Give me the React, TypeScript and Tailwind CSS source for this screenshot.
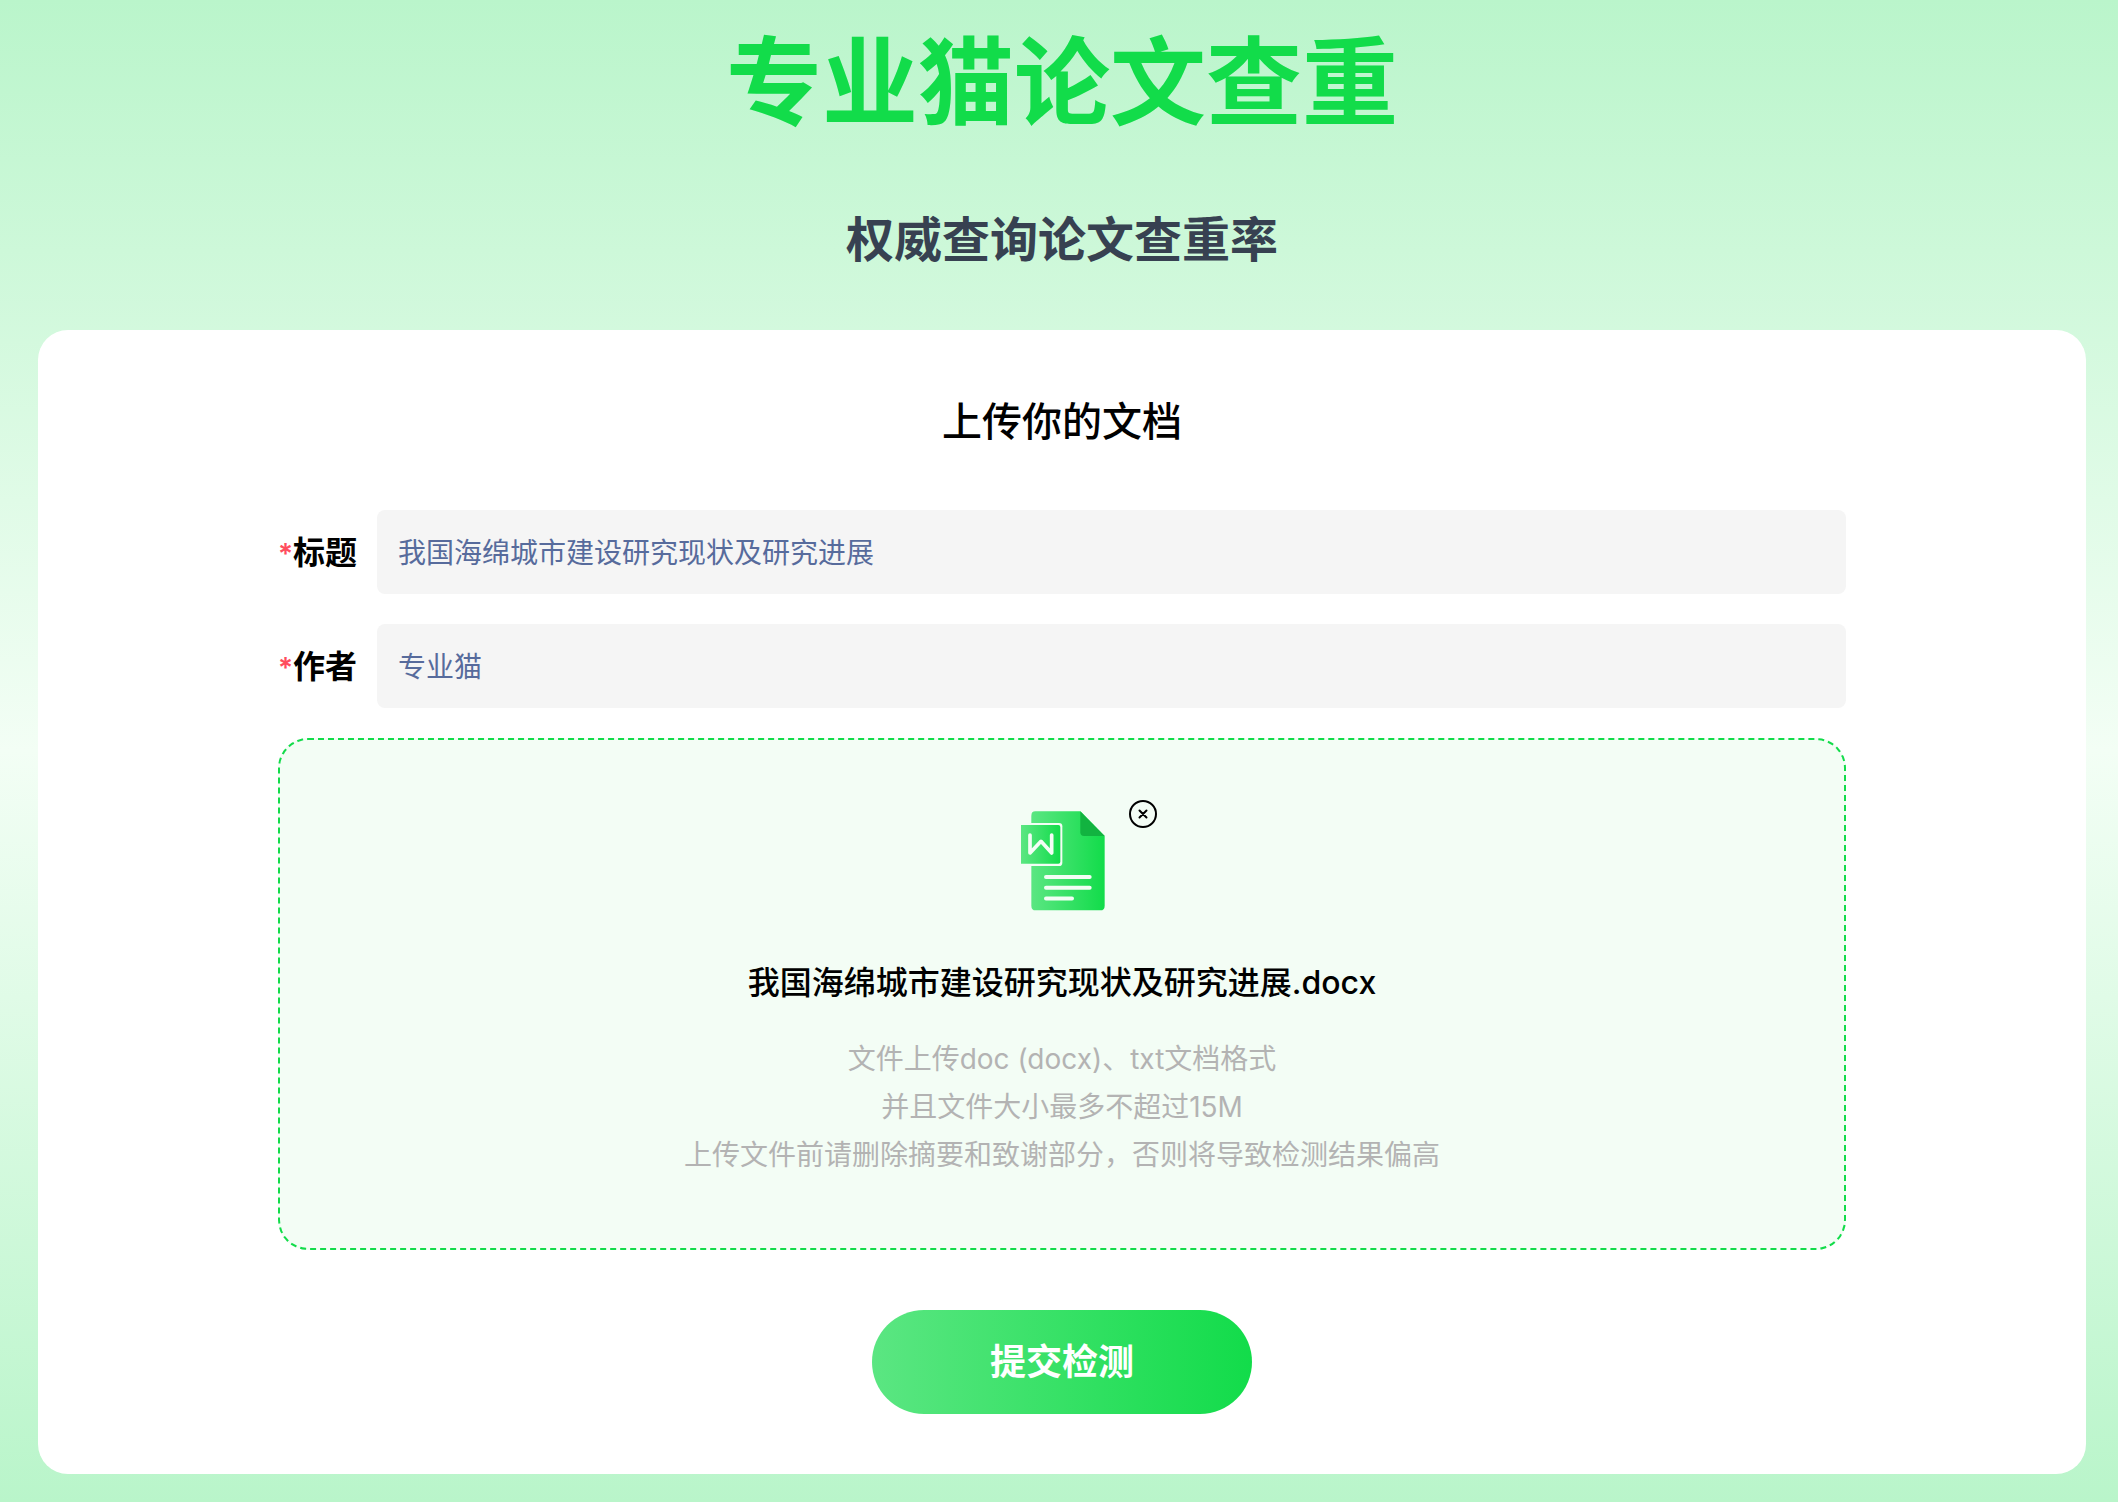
import React, { useId, useState } from "react";

type FieldProps = {
  label: string;
  initial: string;
};

function Field({ label, initial }: FieldProps) {
  const id = useId();
  const [value, setValue] = useState(initial);
  return (
    <div className="flex items-center">
      <label htmlFor={id} className="shrink-0 w-[99px] pt-0.5 text-[32px] leading-[48px] font-semibold text-black whitespace-nowrap">
        <span className="text-[28px] text-[#ff4d5e]">*</span>
        {label}
      </label>
      <input
        id={id}
        type="text"
        required
        value={value}
        onChange={(e) => setValue(e.target.value)}
        className="min-w-0 flex-1 h-[84px] rounded-lg bg-[#f5f5f5] px-[21px] pb-0.5 text-[28px] text-[#576b9c] outline-none"
      />
    </div>
  );
}

function WordFileIcon() {
  return (
    <svg viewBox="116 92 258 300" className="w-[86px] h-[100px]" aria-hidden="true">
      <defs>
        <linearGradient id="page" x1="0" y1="0" x2="1" y2="0">
          <stop offset="0" stopColor="#5be682" />
          <stop offset="1" stopColor="#12dc4a" />
        </linearGradient>
      </defs>
      <path d="M165 93H300L373 167V376Q373 390 360 390H166Q153 390 153 376V106Q153 93 165 93Z" fill="url(#page)" />
      <path d="M300 93L373 167H311Q300 167 300 156Z" fill="#12b340" />
      <path d="M122 128H236Q246 128 246 138V247Q246 257 236 257H122Z" fill="#f3fdf5" />
      <path d="M122 134H234Q240 134 240 140V244Q240 250 234 250H122Z" fill="url(#page)" />
      <path d="M149 164V218L182 183L214 218V164" fill="none" stroke="#f3fdf5" strokeWidth="11" strokeLinecap="round" strokeLinejoin="round" />
      <path d="M197 290H328M197 322.500H328M197 354.500H275" fill="none" stroke="#f3fdf5" strokeWidth="12" strokeLinecap="round" />
    </svg>
  );
}

function CloseIcon() {
  return (
    <svg viewBox="0 0 28 28" className="w-7 h-7" fill="none" stroke="#000" strokeWidth="2" strokeLinecap="round" aria-hidden="true">
      <circle cx="14" cy="14" r="13" />
      <path d="M10.500 10.500L17.500 17.500M17.500 10.500L10.500 17.500" />
    </svg>
  );
}

export default function App() {
  return (
    <main
      lang="zh-CN"
      className="min-h-screen flex flex-col bg-linear-to-b/srgb from-[#baf5cb] via-[#f3fef5] to-[#b9f5ca] pt-[34px] pb-7 pl-[38px] pr-8 font-['Inter','Noto_Sans_CJK_SC',sans-serif] antialiased"
    >
      <h1 className="text-center text-[96px] leading-[96px] font-semibold text-[#12dc4a]">专业猫论文查重</h1>
      <h2 className="mt-[78px] text-center text-[48px] leading-[64px] font-semibold text-[#374151]">权威查询论文查重率</h2>

      <section className="mt-[58px] rounded-[30px] bg-white px-[240px] pt-[62px] pb-[60px]">
        <h3 className="text-center text-[40px] leading-[60px] font-medium text-black">上传你的文档</h3>

        <form className="mt-[58px] flex flex-col" onSubmit={(e) => e.preventDefault()}>
          <div className="flex flex-col gap-[30px]">
            <Field label="标题" initial="我国海绵城市建设研究现状及研究进展" />
            <Field label="作者" initial="专业猫" />

            <div className="flex flex-col items-center rounded-[30px] border-2 border-dashed border-[#12dc4a] bg-[#f3fdf5] pt-[71px] pb-[69px]">
              <div className="relative">
                <WordFileIcon />
                <button type="button" aria-label="删除文件" className="absolute -top-[11px] left-[110px]">
                  <CloseIcon />
                </button>
              </div>
              <p className="mt-[48px] text-[32px] leading-[48px] font-medium text-black">
                我国海绵城市建设研究现状及研究进展.docx
              </p>
              <div className="mt-[28px] text-center text-[28px] leading-[48px] text-[#b3b3b3]">
                <p>文件上传doc (docx)、txt文档格式</p>
                <p>并且文件大小最多不超过15M</p>
                <p>上传文件前请删除摘要和致谢部分，否则将导致检测结果偏高</p>
              </div>
            </div>
          </div>

          <button
            type="submit"
            className="mt-[60px] self-center w-[380px] h-[104px] rounded-full bg-linear-to-r/srgb from-[#5be682] to-[#12dc4a] text-[36px] font-semibold text-white"
          >
            提交检测
          </button>
        </form>
      </section>
    </main>
  );
}
